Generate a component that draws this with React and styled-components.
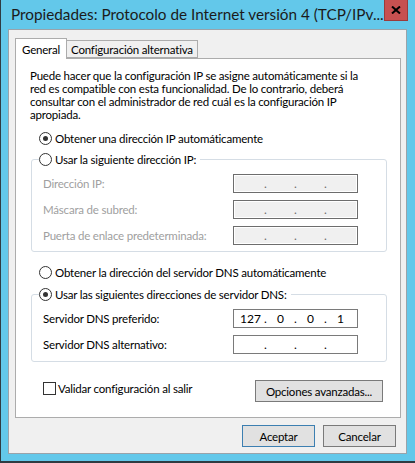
import React from 'react';
import styled, { createGlobalStyle, css } from 'styled-components';

const Global = createGlobalStyle`
  html, body { margin: 0; padding: 0; background: #ffffff; }
  body { font-family: Lato, "Liberation Sans", sans-serif; color: #000; }
  *, *::before, *::after { box-sizing: border-box; }
`;

const FONT = `Lato, "Liberation Sans", sans-serif`;

const uiText = css`
  font-size: 11.5px;
  letter-spacing: -0.2px;
`;

const Window = styled.div`
  width: 415px;
  height: 463px;
  background: #63c8ea;
  border-left: 1px solid #2f3b42;
  border-bottom: 2px solid #2f3b42;
  padding: 0 8px 7px 7px;
  display: flex;
  flex-direction: column;
  font-family: ${FONT};
`;

const TitleBar = styled.div`
  height: 29px;
  flex: none;
  display: flex;
  align-items: flex-start;
  justify-content: space-between;
`;

const Title = styled.div`
  margin-left: 3px;
  font-size: 15.3px;
  line-height: 29px;
  color: #1b1b1b;
  white-space: nowrap;
`;

const CloseButton = styled.div`
  width: 34px;
  height: 21px;
  margin-right: -1px;
  background: #c75050;
  border: 1px solid #9b3b3b;
  border-top: none;
  display: flex;
  align-items: center;
  justify-content: center;
`;

const Client = styled.div`
  flex: 1;
  background: #f0f0f0;
  border: 1px solid #9aa3aa;
  padding: 8px 5px 0 6px;
  display: flex;
  flex-direction: column;
`;

const TabBar = styled.div`
  height: 21px;
  flex: none;
  display: flex;
  align-items: flex-start;
  margin-bottom: -1px;
`;

const Tab = styled.div`
  height: ${p => (p.$active ? 21 : 18)}px;
  margin-top: ${p => (p.$active ? 0 : 2)}px;
  margin-left: ${p => (p.$active ? 0 : -1)}px;
  padding: 0 ${p => (p.$active ? 6 : 4)}px;
  border: 1px solid #acacac;
  border-bottom: ${p => (p.$active ? 'none' : '1px solid #acacac')};
  background: ${p => (p.$active ? '#ffffff' : '#f0f0f0')};
  position: ${p => (p.$active ? 'relative' : 'static')};
  z-index: ${p => (p.$active ? 1 : 'auto')};
  ${uiText};
  display: flex;
  align-items: center;
  white-space: nowrap;
`;

const Panel = styled.div`
  height: 360px;
  flex: none;
  background: #ffffff;
  border: 1px solid #acacac;
  padding: 10px 13px 0 14px;
  display: flex;
  flex-direction: column;
`;

const Paragraph = styled.p`
  margin: 0 0 6px 0;
  ${uiText};
  line-height: 13px;
  white-space: nowrap;
`;

const RadioRow = styled.label`
  height: 21px;
  display: flex;
  align-items: center;
  gap: 3px;
  padding-left: 9px;
  ${uiText};
  white-space: nowrap;
  margin-top: ${p => p.$mt || 0}px;
`;

const RadioCircle = styled.span`
  width: 13px;
  height: 13px;
  flex: none;
  border: 1px solid #333333;
  border-radius: 50%;
  background: #ffffff;
  display: flex;
  align-items: center;
  justify-content: center;
  &::after {
    content: '';
    width: 5px;
    height: 5px;
    border-radius: 50%;
    background: ${p => (p.$checked ? '#333333' : 'transparent')};
  }
`;

const Group = styled.fieldset`
  margin: ${p => p.$mt || 0}px 0 0 1px;
  padding: 0;
  border: 1px solid #d5dde5;
  border-radius: 3px;
  min-width: 0;
`;

const Legend = styled.legend`
  margin-left: 7px;
  padding: 0 4px 0 0;
  height: 15px;
  display: flex;
  align-items: center;
  gap: 3px;
  ${uiText};
  white-space: nowrap;
`;

const FieldRows = styled.div`
  display: flex;
  flex-direction: column;
  gap: 7px;
  padding: 7px 28px ${p => p.$pb}px 11px;
`;

const FieldRow = styled.div`
  height: 19px;
  display: flex;
  align-items: center;
  justify-content: space-between;
  ${uiText};
  color: ${p => (p.$disabled ? '#a0a0a0' : '#000000')};
  white-space: nowrap;
`;

const IpBox = styled.div`
  width: 125px;
  height: 19px;
  flex: none;
  border: 1px solid ${p => (p.$disabled ? '#6d6d6d' : '#7a7a7a')};
  background: ${p => (p.$disabled ? '#f0f0f0' : '#ffffff')};
  box-shadow: ${p => (p.$disabled ? 'inset 0 0 0 1px #ffffff' : 'none')};
  padding-left: 3px;
  display: flex;
  align-items: center;
  font-size: 12px;
  letter-spacing: 0;
  color: ${p => (p.$disabled ? '#6d6d6d' : '#000000')};
`;

const Octet = styled.span`
  width: 27px;
  text-align: center;
`;

const Dot = styled.span`
  width: 3px;
  text-align: center;
`;

const BottomRow = styled.div`
  margin-top: 18px;
  height: 22px;
  display: flex;
  align-items: flex-start;
  justify-content: space-between;
`;

const CheckLabel = styled.label`
  height: 16px;
  display: flex;
  align-items: center;
  gap: 2px;
  padding-left: 13px;
  ${uiText};
  white-space: nowrap;
`;

const CheckBox = styled.span`
  width: 13px;
  height: 13px;
  flex: none;
  border: 1px solid #333333;
  background: #ffffff;
`;

const Button = styled.div`
  width: ${p => p.$w}px;
  height: 22px;
  margin-right: ${p => p.$mr || 0}px;
  background: #e1e1e1;
  border: 1px solid ${p => (p.$default ? '#3c7fb1' : '#7a7a7a')};
  display: flex;
  align-items: center;
  justify-content: center;
  ${uiText};
  white-space: nowrap;
`;

const Footer = styled.div`
  margin-top: 7px;
  display: flex;
  justify-content: flex-end;
  gap: 8px;
  padding-right: 5px;
`;

function IpField({ values, disabled }) {
  const v = values || ['', '', '', ''];
  return (
    <IpBox $disabled={disabled}>
      <Octet>{v[0]}</Octet>
      <Dot>.</Dot>
      <Octet>{v[1]}</Octet>
      <Dot>.</Dot>
      <Octet>{v[2]}</Octet>
      <Dot>.</Dot>
      <Octet>{v[3]}</Octet>
    </IpBox>
  );
}

function Radio({ checked }) {
  return <RadioCircle $checked={checked} />;
}

export default function App() {
  return (
    <>
      <Global />
      <Window>
        <TitleBar>
          <Title>Propiedades: Protocolo de Internet versión 4 (TCP/IPv...</Title>
          <CloseButton>
            <svg width="10" height="8" viewBox="0 0 10 8">
              <path d="M1 0.5 L9 7.5 M9 0.5 L1 7.5" stroke="#000" strokeWidth="2" />
            </svg>
          </CloseButton>
        </TitleBar>
        <Client>
          <TabBar>
            <Tab $active>General</Tab>
            <Tab>Configuración alternativa</Tab>
          </TabBar>
          <Panel>
            <Paragraph>
              Puede hacer que la configuración IP se asigne automáticamente si la
              <br />
              red es compatible con esta funcionalidad. De lo contrario, deberá
              <br />
              consultar con el administrador de red cuál es la configuración IP
              <br />
              apropiada.
            </Paragraph>
            <RadioRow $mt={1}>
              <Radio checked />
              Obtener una dirección IP automáticamente
            </RadioRow>
            <Group $mt={3}>
              <Legend>
                <Radio />
                Usar la siguiente dirección IP:
              </Legend>
              <FieldRows $pb={6}>
                <FieldRow $disabled>
                  Dirección IP:
                  <IpField disabled />
                </FieldRow>
                <FieldRow $disabled>
                  Máscara de subred:
                  <IpField disabled />
                </FieldRow>
                <FieldRow $disabled>
                  Puerta de enlace predeterminada:
                  <IpField disabled />
                </FieldRow>
              </FieldRows>
            </Group>
            <RadioRow $mt={10}>
              <Radio />
              Obtener la dirección del servidor DNS automáticamente
            </RadioRow>
            <Group $mt={4}>
              <Legend>
                <Radio checked />
                Usar las siguientes direcciones de servidor DNS:
              </Legend>
              <FieldRows $pb={7}>
                <FieldRow>
                  Servidor DNS preferido:
                  <IpField values={['127', '0', '0', '1']} />
                </FieldRow>
                <FieldRow>
                  Servidor DNS alternativo:
                  <IpField />
                </FieldRow>
              </FieldRows>
            </Group>
            <BottomRow>
              <CheckLabel>
                <CheckBox />
                Validar configuración al salir
              </CheckLabel>
              <Button $w={128} $mr={4}>Opciones avanzadas...</Button>
            </BottomRow>
          </Panel>
          <Footer>
            <Button $w={73} $default>Aceptar</Button>
            <Button $w={73}>Cancelar</Button>
          </Footer>
        </Client>
      </Window>
    </>
  );
}
